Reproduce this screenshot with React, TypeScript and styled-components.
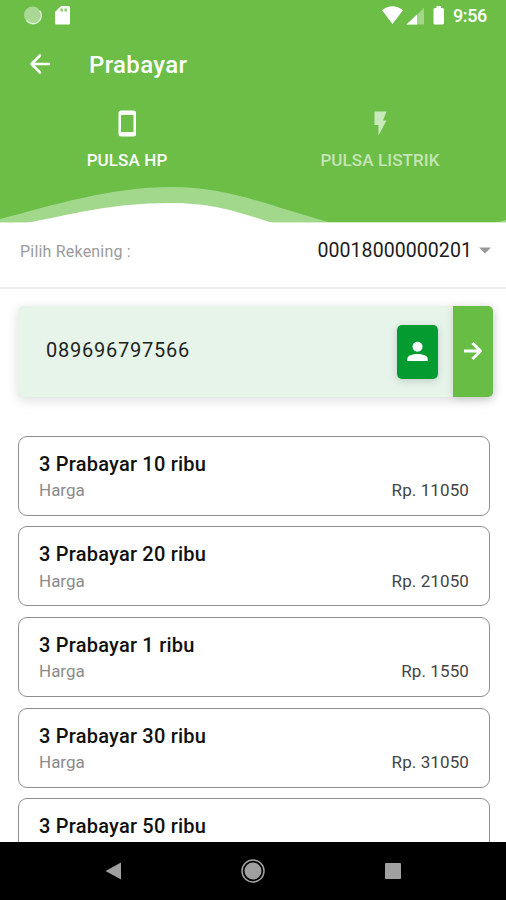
import React from 'react';
import styled, { createGlobalStyle } from 'styled-components';

const Global = createGlobalStyle`
  * { box-sizing: border-box; }
  body { margin: 0; background: #fff; font-family: Roboto, "Noto Sans", sans-serif; overflow: hidden; }
  svg { display: block; flex: none; }
`;

const Screen = styled.div`
  width: 506px;
  height: 900px;
  display: flex;
  flex-direction: column;
  overflow: hidden;
  background: #fff;
`;

const Header = styled.header`
  flex: none;
  height: 223px;
  background: #6cbe47;
  color: #fff;
  display: flex;
  flex-direction: column;
`;

const StatusBar = styled.div`
  height: 32px;
  padding: 0 18px 2px 23px;
  display: flex;
  align-items: center;
  justify-content: space-between;
`;

const StatusGroup = styled.div`
  display: flex;
  align-items: center;
`;

const Clock = styled.span`
  font-size: 18px;
  font-weight: 500;
  line-height: 30px;
  width: 35px;
  letter-spacing: -0.4px;
  margin-left: 9px;
  padding-top: 2px;
  white-space: nowrap;
`;

const Toolbar = styled.div`
  height: 66px;
  padding: 0 0 2px 28px;
  display: flex;
  align-items: center;
`;

const Title = styled.h1`
  margin: 0 0 0 37px;
  padding-top: 1px;
  font-size: 24px;
  font-weight: 500;
  line-height: 30px;
  letter-spacing: 0.35px;
`;

const Tabs = styled.nav`
  height: 86px;
  display: grid;
  grid-template-columns: 1fr 1fr;
`;

const Tab = styled.div<{ $active?: boolean }>`
  display: flex;
  flex-direction: column;
  align-items: center;
  padding: 10px 0 0 1px;
  color: ${(p) => (p.$active ? '#fff' : '#c4e5b6')};
`;

const TabLabel = styled.span`
  margin-top: 11px;
  font-size: 17px;
  font-weight: 500;
  line-height: 20px;
  letter-spacing: 0.1px;
`;

const AccountRow = styled.section`
  flex: none;
  height: 66px;
  padding: 0 15px 9px 20px;
  border-bottom: 2px solid #ededed;
  display: flex;
  align-items: center;
  justify-content: space-between;
`;

const AccountLabel = styled.span`
  font-size: 16px;
  line-height: 22px;
  letter-spacing: 0.2px;
  color: #9b9b9b;
  padding-top: 2px;
`;

const AccountValue = styled.div`
  display: flex;
  align-items: center;
  font-size: 19.5px;
  line-height: 24px;
  letter-spacing: 0.08px;
  color: #1b1b1b;
  gap: 7px;
`;

const PhoneField = styled.section`
  flex: none;
  margin: 17px 13px 0 18px;
  height: 91px;
  display: flex;
  align-items: center;
  background: #e6f4ea;
  border-radius: 5px;
  box-shadow: 0 3px 12px rgba(0, 0, 0, 0.14);
`;

const PhoneNumber = styled.span`
  flex: 1;
  padding: 0 0 4px 28px;
  font-size: 20px;
  line-height: 24px;
  letter-spacing: 0.75px;
  color: #1e2420;
`;

const ContactButton = styled.button`
  width: 41px;
  height: 54px;
  margin-right: 15px;
  padding: 0;
  border: 0;
  border-radius: 5px;
  background: #049b31;
  box-shadow: 0 2px 9px rgba(0, 0, 0, 0.16);
  display: grid;
  place-items: center;
`;

const SubmitButton = styled.button`
  width: 40px;
  height: 91px;
  padding: 0 0 2px;
  border: 0;
  border-radius: 0 5px 5px 0;
  background: #68be45;
  box-shadow: 0 2px 9px rgba(0, 0, 0, 0.13);
  display: grid;
  place-items: center;
`;

const ProductList = styled.main`
  flex: 1;
  min-height: 0;
  overflow: hidden;
  padding: 38.6px 16px 0 18px;
  display: flex;
  flex-direction: column;
  gap: 10.7px;
`;

const ProductCard = styled.article`
  flex: none;
  height: 80px;
  padding: 14px 20px 0;
  border: 1.5px solid #8f8f8f;
  border-radius: 9px;
`;

const ProductName = styled.h2`
  margin: 0;
  font-size: 20px;
  font-weight: 500;
  line-height: 26px;
  letter-spacing: 0.22px;
  color: #111;
`;

const PriceRow = styled.div`
  margin-top: 1.5px;
  display: flex;
  justify-content: space-between;
  font-size: 17px;
  line-height: 24px;
`;

const PriceLabel = styled.span`
  color: #8b8b8b;
`;

const Price = styled.span`
  color: #444;
  letter-spacing: 0.1px;
`;

const NavBar = styled.footer`
  flex: none;
  height: 58px;
  background: #000;
  display: flex;
  align-items: center;
  justify-content: space-between;
  padding: 0 104px;
`;

const products: { name: string; price?: string }[] = [
  { name: '3 Prabayar 10 ribu', price: 'Rp. 11050' },
  { name: '3 Prabayar 20 ribu', price: 'Rp. 21050' },
  { name: '3 Prabayar 1 ribu', price: 'Rp. 1550' },
  { name: '3 Prabayar 30 ribu', price: 'Rp. 31050' },
  { name: '3 Prabayar 50 ribu' },
];

const Wave = () => (
  <svg width="506" height="39" viewBox="0 0 506 39">
    <path d="M0 35C50 22 110 3 172 3C230 3 268 22 332 39H0Z" fill="#a2d88c" />
    <path d="M492 39Q500 38 506 36V39Z" fill="#a2d88c" />
    <path d="M0 39H26C70 31 110 19 170 19C216 19 240 29 273 39Z" fill="#fff" />
    <path d="M0 38.500H506" stroke="#d4edc9" />
    <path d="M28 38.500H272" stroke="#fff" />
  </svg>
);

export default function App() {
  return (
    <>
      <Global />
      <Screen>
        <Header>
          <StatusBar>
            <StatusGroup>
              <svg width="48" height="20" viewBox="0 0 48 20">
                <circle cx="9.500" cy="10" r="8.500" fill="#a9d894" />
                <path d="M16.600 5.500A8 8 0 0 1 3.500 15.500" fill="none" stroke="#e1f2d9" strokeWidth="1.400" />
                <path d="M38 1H45.500Q47 1 47 2.500V18Q47 19.500 45.500 19.500H33.500Q32 19.500 32 18V7Z" fill="#fff" />
                <path d="M37.300 3.500h2.600v3h-2.600zM41.400 3.500h2.600v3h-2.600z" fill="#8fcd74" />
              </svg>
            </StatusGroup>
            <StatusGroup>
              <svg width="62" height="20" viewBox="0 0 62 20">
                <path d="M0 5.200Q10.500 -2.600 21 5.200L10.500 19Z" fill="#fff" />
                <path d="M42 3V19.500H24.500Z" fill="#a2d68b" />
                <path d="M35 9.500V19.500H24.500Z" fill="#fff" />
                <path d="M53 3H54.500V1H59V3H60.500Q62 3 62 4.500V18Q62 19.500 60.500 19.500H53Q51.500 19.500 51.500 18V4.500Q51.500 3 53 3Z" fill="#fff" />
              </svg>
              <Clock>9:56</Clock>
            </StatusGroup>
          </StatusBar>
          <Toolbar>
            <svg width="24" height="24" viewBox="0 0 24 24" fill="none" stroke="#fff" strokeWidth="2.500" strokeLinecap="round" strokeLinejoin="round">
              <path d="M21 12H3.500M12 3.500L3.500 12L12 20.500" />
            </svg>
            <Title>Prabayar</Title>
          </Toolbar>
          <Tabs>
            <Tab $active>
              <svg width="30" height="31" viewBox="0 0 30 31">
                <path fillRule="evenodd" d="M9 2.500H21.500Q24 2.500 24 5V26Q24 28.500 21.500 28.500H9Q6.500 28.500 6.500 26V5Q6.500 2.500 9 2.500ZM9 7V24H21.500V7Z" fill="#fff" />
              </svg>
              <TabLabel>PULSA HP</TabLabel>
            </Tab>
            <Tab>
              <svg width="30" height="31" viewBox="0 0 30 31">
                <path d="M9.500 3.500H21.500L18 12.500H21.500L13.500 27.500V17H9.500Z" fill="#c9e9bd" />
              </svg>
              <TabLabel>PULSA LISTRIK</TabLabel>
            </Tab>
          </Tabs>
          <Wave />
        </Header>
        <AccountRow>
          <AccountLabel>Pilih Rekening :</AccountLabel>
          <AccountValue>
            00018000000201
            <svg width="12" height="7" viewBox="0 0 12 7"><path d="M0 .5H12L6 6.500Z" fill="#999" /></svg>
          </AccountValue>
        </AccountRow>
        <PhoneField>
          <PhoneNumber>089696797566</PhoneNumber>
          <ContactButton aria-label="Kontak">
            <svg width="22" height="22" viewBox="0 0 22 22" fill="#fff">
              <circle cx="10.500" cy="5.700" r="5" />
              <path d="M.3 20V17.800C.3 14.600 5.500 13 10.500 13S20.700 14.600 20.700 17.800V20Z" />
            </svg>
          </ContactButton>
          <SubmitButton aria-label="Lanjut">
            <svg width="20" height="20" viewBox="0 0 20 20" fill="none" stroke="#fff" strokeWidth="3" strokeLinejoin="round">
              <path d="M1 10H17M9.500 2L17.500 10L9.500 18" />
            </svg>
          </SubmitButton>
        </PhoneField>
        <ProductList>
          {products.map((p) => (
            <ProductCard key={p.name}>
              <ProductName>{p.name}</ProductName>
              {p.price && (
                <PriceRow>
                  <PriceLabel>Harga</PriceLabel>
                  <Price>{p.price}</Price>
                </PriceRow>
              )}
            </ProductCard>
          ))}
        </ProductList>
        <NavBar>
          <svg width="18" height="18" viewBox="0 0 18 18"><path d="M1.500 9L17 .5V17.500Z" fill="#a0a0a0" /></svg>
          <svg width="24" height="24" viewBox="0 0 24 24">
            <circle cx="12" cy="12" r="11" fill="none" stroke="#a0a0a0" strokeWidth="1.500" />
            <circle cx="12" cy="12" r="8.500" fill="#a0a0a0" />
          </svg>
          <svg width="18" height="18" viewBox="0 0 18 18"><rect x="1" y="1" width="16" height="16" rx="1" fill="#a0a0a0" /></svg>
        </NavBar>
      </Screen>
    </>
  );
}
